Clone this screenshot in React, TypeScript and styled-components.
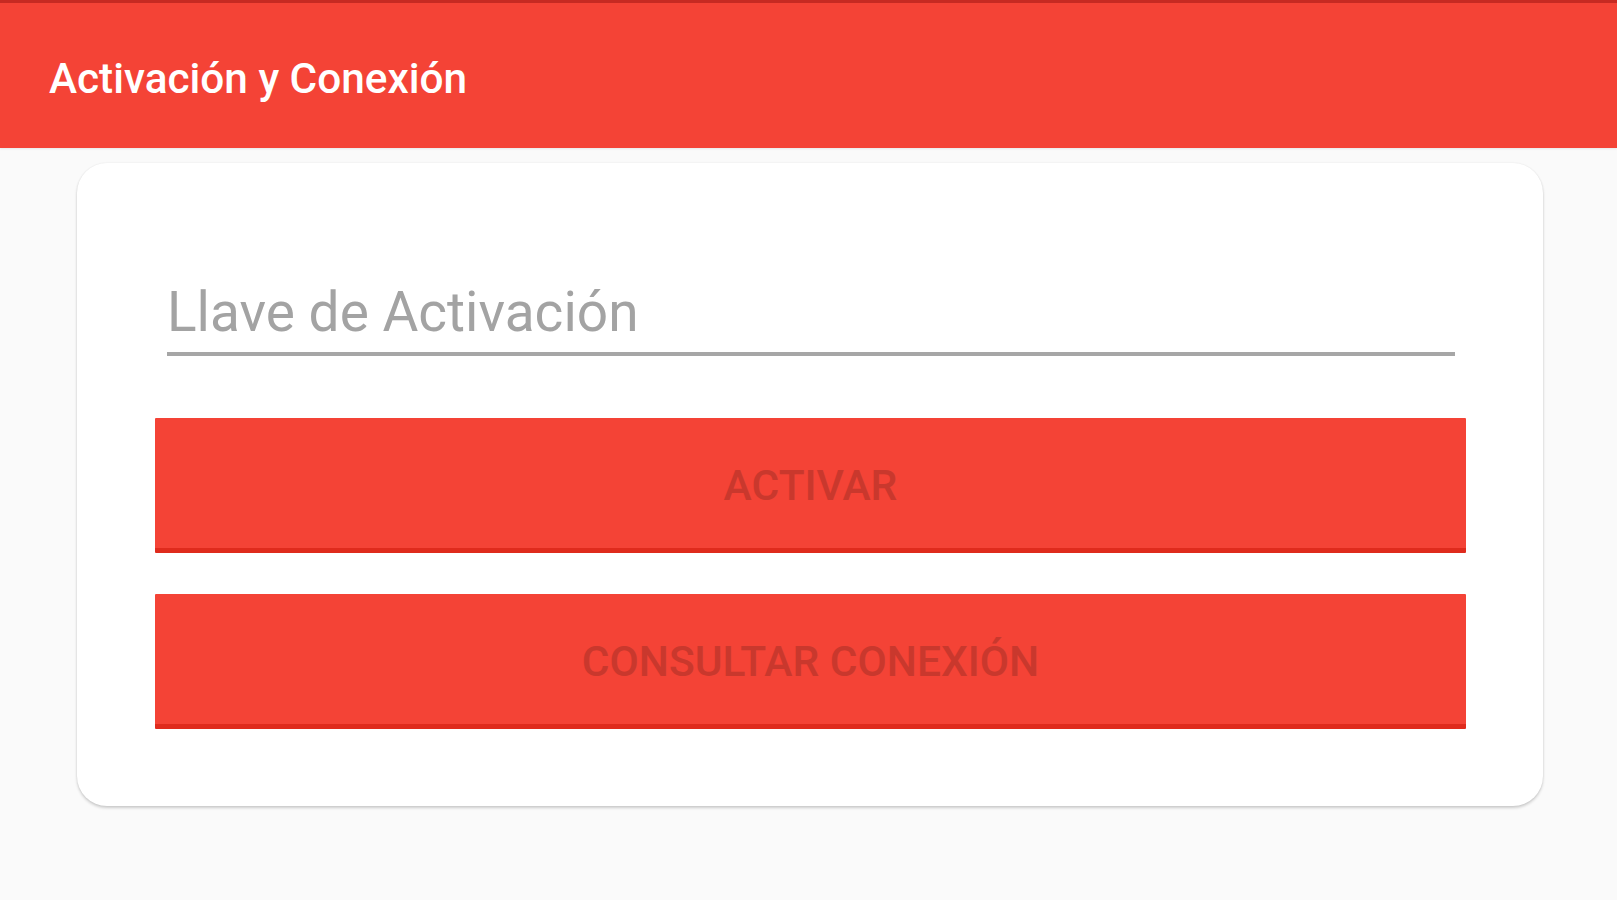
import styled, { createGlobalStyle } from 'styled-components';

const GlobalStyle = createGlobalStyle`
  html, body {
    margin: 0;
    padding: 0;
    background: #fafafa;
    font-family: Roboto, "Liberation Sans", Arial, sans-serif;
  }
`

const Screen = styled.div`
  width: 1617px;
  height: 900px;
  background: #fafafa;
  overflow: hidden;
`

const AppBar = styled.header`
  height: 145px;
  display: flex;
  align-items: center;
  padding: 0 0 0 49px;
  background: #f44336;
  border-top: 3px solid #c62a22;
  box-shadow: 0 1px 2px rgba(0, 0, 0, 0.08);
`

const Title = styled.h1`
  margin: 0;
  padding-top: 5px;
  font-size: 42.3px;
  font-weight: 500;
  color: #ffffff;
`

const Content = styled.main`
  padding: 15px 74px 0 77px;
`

const Card = styled.section`
  display: flex;
  flex-direction: column;
  padding: 117px 77px 77px 78px;
  background: #ffffff;
  border-radius: 30px;
  box-shadow: 0 2px 3px rgba(0, 0, 0, 0.18), 0 0 2px rgba(0, 0, 0, 0.08);
`

const Field = styled.label`
  display: block;
  margin: 0 11px 62px 12px;
  padding-bottom: 8px;
  border-bottom: 4px solid #a6a6a6;
`

const KeyInput = styled.input`
  display: block;
  width: 100%;
  height: 64px;
  margin: 0;
  padding: 0;
  border: none;
  outline: none;
  background: transparent;
  font-family: Roboto, "Liberation Sans", Arial, sans-serif;
  font-size: 55px;
  line-height: 64px;
  color: #333;

  &::placeholder {
    color: #a3a3a3;
    opacity: 1;
  }
`

const ActionButton = styled.button<{ last?: boolean }>`
  display: flex;
  align-items: center;
  justify-content: center;
  height: 135px;
  margin: 0 0 ${props => props.last ? '0' : '41px'} 0;
  padding: 4px 0 0 0;
  border: none;
  border-bottom: 5px solid #df2b1d;
  border-radius: 1px;
  background: #f44336;
  font-family: Roboto, "Liberation Sans", Arial, sans-serif;
  font-size: 42.5px;
  font-weight: 500;
  text-transform: uppercase;
  color: #c9382d;
  cursor: default;
`

export default function App() {
  return (
    <Screen>
      <GlobalStyle />
      <AppBar>
        <Title>Activación y Conexión</Title>
      </AppBar>
      <Content>
        <Card>
          <Field>
            <KeyInput placeholder="Llave de Activación" />
          </Field>
          <ActionButton>Activar</ActionButton>
          <ActionButton last>Consultar Conexión</ActionButton>
        </Card>
      </Content>
    </Screen>
  );
}
